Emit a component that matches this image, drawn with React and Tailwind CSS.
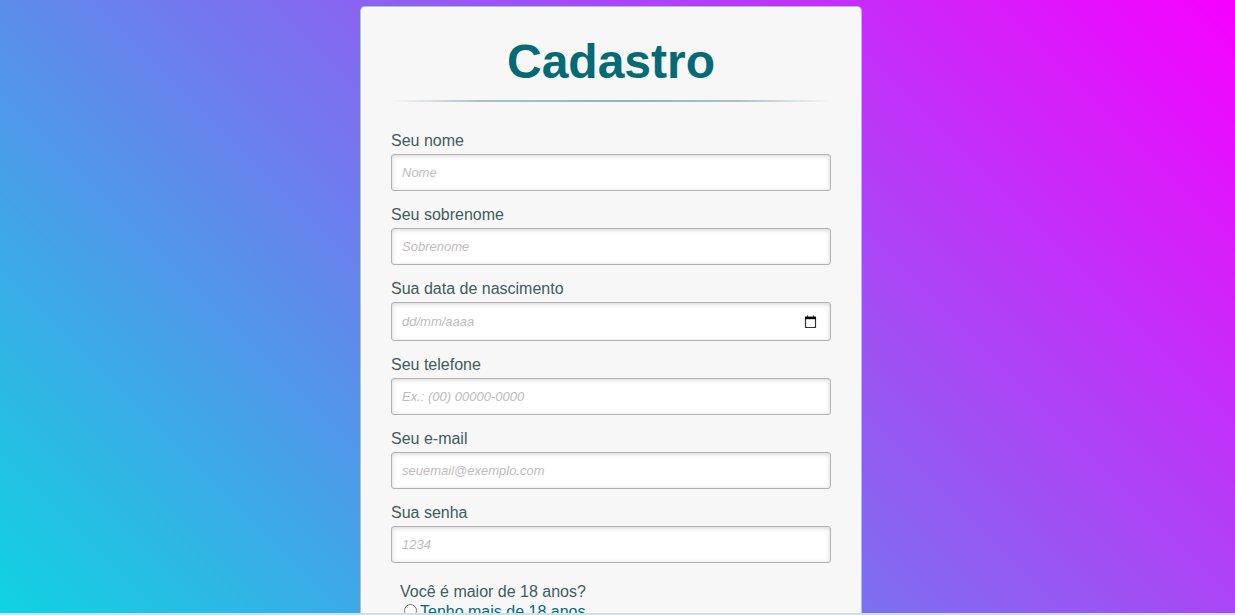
const fields = [
  { id: 'nome', label: 'Seu nome', type: 'text', placeholder: 'Nome' },
  { id: 'sobrenome', label: 'Seu sobrenome', type: 'text', placeholder: 'Sobrenome' },
  { id: 'nascimento', label: 'Sua data de nascimento', type: 'text', placeholder: 'dd/mm/aaaa', calendar: true },
  { id: 'telefone', label: 'Seu telefone', type: 'tel', placeholder: 'Ex.: (00) 00000-0000' },
  { id: 'email', label: 'Seu e-mail', type: 'email', placeholder: 'seuemail@exemplo.com' },
  { id: 'senha', label: 'Sua senha', type: 'password', placeholder: '1234' },
];

const boxClass =
  'flex items-center rounded-[3px] border border-[#b2b2b2] bg-white px-2.5 shadow-[inset_0_1px_4px_rgba(168,168,168,0.5)]';

function Field({ id, label, type, placeholder, calendar }) {
  return (
    <div className="flex flex-col gap-0.5">
      <label htmlFor={id} className="text-base leading-[22px] text-[#405c60]">
        {label}
      </label>
      <div className={calendar ? `${boxClass} h-[39px]` : `${boxClass} h-[37px]`}>
        <input
          id={id}
          name={id}
          type={type}
          placeholder={placeholder}
          className="h-full min-w-0 flex-1 bg-transparent text-[13px] outline-none placeholder:italic placeholder:text-[#bebcbc]"
        />
        {calendar && (
          <button type="button" aria-label="Abrir calendário" className="px-[3px]">
            <svg width="13" height="14" viewBox="0 0 13 14" fill="none">
              <path d="M3.5 0.5V2M9.5 0.5V2" stroke="#333" strokeWidth="1.2" />
              <path d="M1.5 2.5h10v10h-10z" stroke="#333" strokeWidth="1.2" strokeLinejoin="round" />
              <path d="M1 1.6h11v2.6H1z" fill="#000" />
            </svg>
          </button>
        )}
      </div>
    </div>
  );
}

export default function App() {
  return (
    <div className="flex h-screen flex-col bg-[#cce2e8] font-['Liberation_Sans',Arial,sans-serif]">
      <main className="min-h-0 flex-1 overflow-hidden bg-[linear-gradient(45deg,#0fd3e1,#f700ff)] pt-1.5 pr-[13px]">
        <form className="mx-auto w-full max-w-[502px] rounded-[5px] border border-[#93b8bd]/80 bg-[#f7f7f7] px-[30px] pt-7 pb-8">
          <h1 className="text-center text-5xl leading-[54px] font-bold text-[#066a75]">Cadastro</h1>
          <div className="mt-[11px] h-0.5 bg-[linear-gradient(to_right,rgba(147,184,189,0)_0%,rgba(147,184,189,0.8)_20%,#8bb5be_53%,rgba(147,184,189,0.8)_79%,rgba(147,184,189,0)_100%)]" />
          <div className="mt-7 flex flex-col gap-[13px]">
            {fields.map((field) => (
              <Field key={field.id} {...field} />
            ))}
          </div>
          <fieldset className="mt-[19px] px-[9px] leading-5">
            <legend className="text-[#405c60]">Você é maior de 18 anos?</legend>
            <div className="flex items-start gap-[3px] pl-1">
              <input id="maior" type="radio" name="idade" className="mt-0.5 size-[13px]" />
              <label htmlFor="maior" className="text-[#066a75]">
                Tenho mais de 18 anos
              </label>
            </div>
            <div className="flex items-start gap-[3px] pl-1">
              <input id="menor" type="radio" name="idade" className="mt-0.5 size-[13px]" />
              <label htmlFor="menor" className="text-[#066a75]">
                Tenho menos de 18 anos
              </label>
            </div>
          </fieldset>
        </form>
      </main>
      <div className="h-0.5 shrink-0" />
    </div>
  );
}
